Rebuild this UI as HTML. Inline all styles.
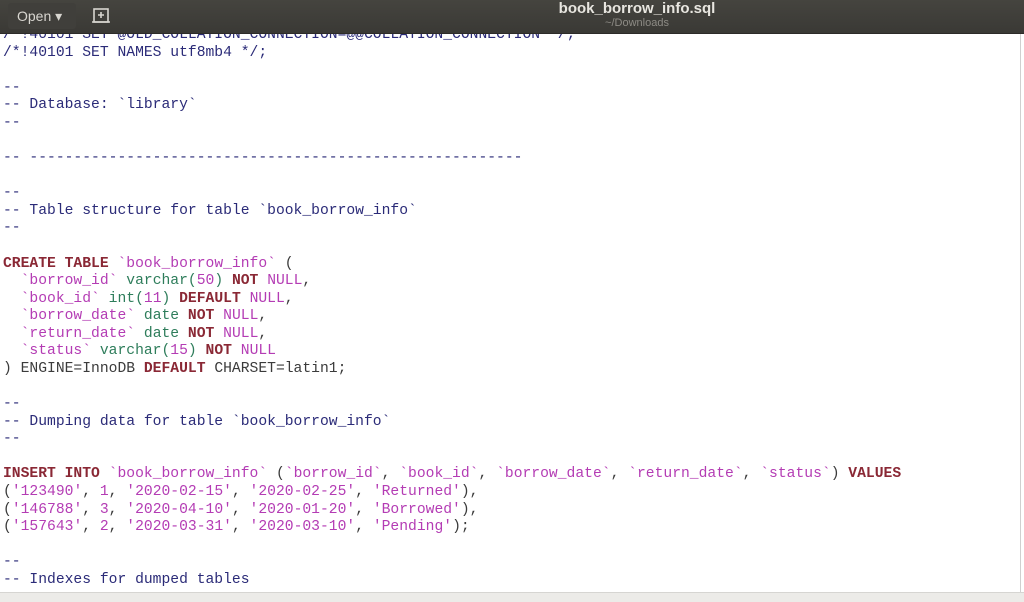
<!DOCTYPE html>
<html><head><meta charset="utf-8"><style>
html,body{margin:0;padding:0;width:1024px;height:601px;overflow:hidden;background:#fff}
#hdr{position:absolute;left:0;top:0;width:1024px;height:33px;background:linear-gradient(#45443f,#3a3935);z-index:2;border-bottom:1px solid #2c2b28}
#open{position:absolute;left:8px;top:3px;width:68px;height:26px;border-radius:3px;background:#403f3b;color:#d8d6d0;font:14px "Liberation Sans",sans-serif;line-height:26px;padding-left:9px;box-sizing:border-box}
#btn2{position:absolute;left:84px;top:3px;width:34px;height:26px}
#title{position:absolute;left:0;width:1274px;top:0px;text-align:center;color:#e8e6e0;font:bold 15px "Liberation Sans",sans-serif}
#sub{position:absolute;left:0;width:1274px;top:17px;text-align:center;color:#8d8b85;font:11px "Liberation Sans",sans-serif}
pre{position:absolute;left:3px;top:27px;margin:0;font:14.68px/17.58px "Liberation Mono",monospace;color:#3b3b3b}
.c{color:#2b2b78}.k{color:#8a2835;font-weight:bold}.s{color:#b43cb4}.t{color:#2e7d5b}
#sb{position:absolute;right:3px;top:34px;width:1px;height:560px;background:#d0d0d0}
#bot{position:absolute;left:0;top:592px;width:1024px;height:9px;background:#ecebe8;border-top:1px solid #d6d5d2}
</style></head><body>
<div id="hdr">
<div id="open">Open ▾</div>
<svg id="btn2" viewBox="0 0 34 26"><rect x="10" y="6" width="14" height="13" fill="none" stroke="#d8d6d0" stroke-width="1.6"/><path d="M17 9v6M14 12h6M8 19h18" stroke="#d8d6d0" stroke-width="1.6"/></svg>
<div id="title">book_borrow_info.sql</div>
<div id="sub">~/Downloads</div>
</div>
<pre><span class="c">/*!40101 SET @OLD_COLLATION_CONNECTION=@@COLLATION_CONNECTION */;
/*!40101 SET NAMES utf8mb4 */;</span>

<span class="c">--
-- Database: `library`
--</span>

<span class="c">-- --------------------------------------------------------</span>

<span class="c">--
-- Table structure for table `book_borrow_info`
--</span>

<span class="k">CREATE TABLE</span> <span class="s">`book_borrow_info`</span> (
  <span class="s">`borrow_id`</span> <span class="t">varchar(<span class="s">50</span>)</span> <span class="k">NOT</span> <span class="s">NULL</span>,
  <span class="s">`book_id`</span> <span class="t">int(<span class="s">11</span>)</span> <span class="k">DEFAULT</span> <span class="s">NULL</span>,
  <span class="s">`borrow_date`</span> <span class="t">date</span> <span class="k">NOT</span> <span class="s">NULL</span>,
  <span class="s">`return_date`</span> <span class="t">date</span> <span class="k">NOT</span> <span class="s">NULL</span>,
  <span class="s">`status`</span> <span class="t">varchar(<span class="s">15</span>)</span> <span class="k">NOT</span> <span class="s">NULL</span>
) ENGINE=InnoDB <span class="k">DEFAULT</span> CHARSET=latin1;

<span class="c">--
-- Dumping data for table `book_borrow_info`
--</span>

<span class="k">INSERT INTO</span> <span class="s">`book_borrow_info`</span> (<span class="s">`borrow_id`</span>, <span class="s">`book_id`</span>, <span class="s">`borrow_date`</span>, <span class="s">`return_date`</span>, <span class="s">`status`</span>) <span class="k">VALUES</span>
(<span class="s">'123490'</span>, <span class="s">1</span>, <span class="s">'2020-02-15'</span>, <span class="s">'2020-02-25'</span>, <span class="s">'Returned'</span>),
(<span class="s">'146788'</span>, <span class="s">3</span>, <span class="s">'2020-04-10'</span>, <span class="s">'2020-01-20'</span>, <span class="s">'Borrowed'</span>),
(<span class="s">'157643'</span>, <span class="s">2</span>, <span class="s">'2020-03-31'</span>, <span class="s">'2020-03-10'</span>, <span class="s">'Pending'</span>);

<span class="c">--
-- Indexes for dumped tables</span></pre>
<div id="sb"></div>
<div id="bot"></div>
</body></html>
